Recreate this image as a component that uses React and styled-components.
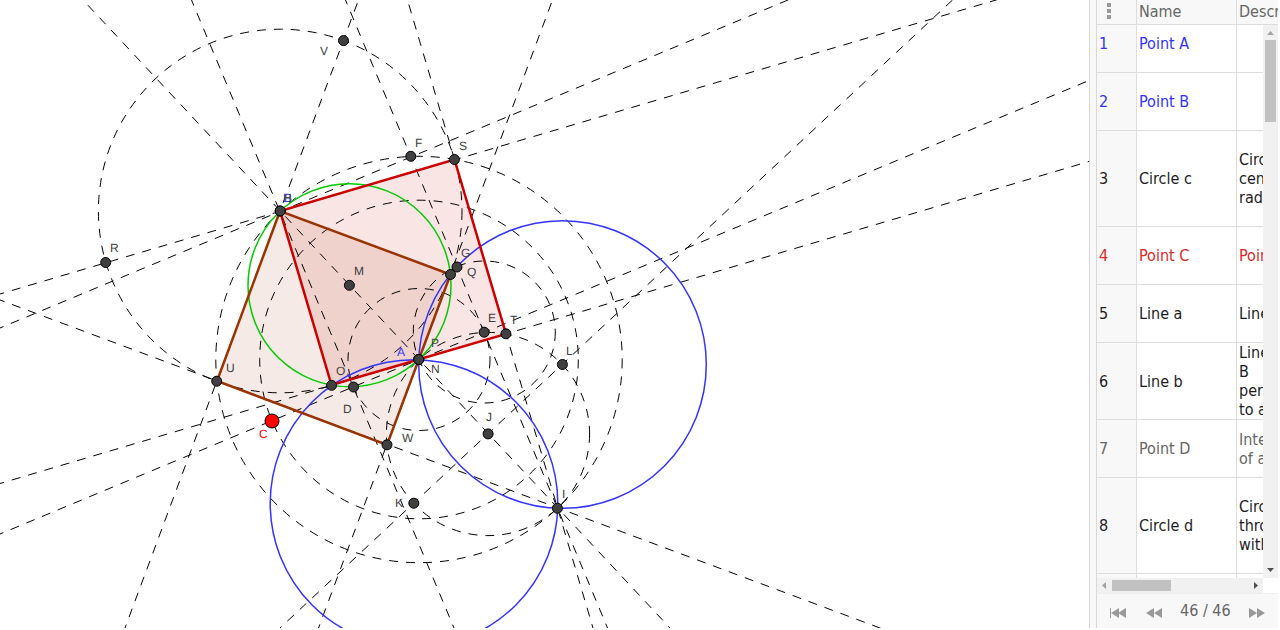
import React from 'react';
import styled, { createGlobalStyle } from 'styled-components';

const DASH = 9;
const GAP = 8;
const REACH = 90;

const points = [
  { name: 'A', x: 418.7, y: 359.5, dx: -22, dy: -4, color: '#3333ff' },
  { name: 'B', x: 280.2, y: 211, dx: 4, dy: -9, color: '#3333ff' },
  { name: 'D', x: 353.5, y: 387, dx: -11, dy: 26 },
  { name: 'E', x: 484.2, y: 332.2, dx: 4, dy: -10 },
  { name: 'F', x: 410.8, y: 156.3, dx: 4, dy: -9 },
  { name: 'G', x: 457, y: 267, dx: 4, dy: -10 },
  { name: 'H', x: 280.2, y: 211, dx: 3, dy: -9 },
  { name: 'I', x: 557.4, y: 508.2, dx: 5, dy: -10 },
  { name: 'J', x: 488.1, y: 433.9, dx: -2, dy: -13 },
  { name: 'K', x: 413.8, y: 503.2, dx: -19, dy: 4 },
  { name: 'L', x: 562.4, y: 364.5, dx: 4, dy: -10 },
  { name: 'M', x: 349.4, y: 285.3, dx: 5, dy: -10 },
  { name: 'N', x: 418.7, y: 359.5, dx: 12, dy: 13 },
  { name: 'O', x: 331.6, y: 385.3, dx: 4, dy: -10 },
  { name: 'P', x: 418.7, y: 359.5, dx: 12, dy: -13 },
  { name: 'Q', x: 450.5, y: 274.5, dx: 16, dy: 1 },
  { name: 'R', x: 105.7, y: 262.5, dx: 4, dy: -11 },
  { name: 'S', x: 454.4, y: 159.5, dx: 5, dy: -10 },
  { name: 'T', x: 505.9, y: 333.8, dx: 4, dy: -10 },
  { name: 'U', x: 216.7, y: 381.2, dx: 9, dy: -9 },
  { name: 'V', x: 343.5, y: 40.6, dx: -24, dy: 14 },
  { name: 'W', x: 387, y: 444.8, dx: 15, dy: -3 },
];

// from, to, and the middle of one dash
const lines = [
  [[0, 534], [1089, 80.5], [768, 214]],
  [[0, 328], [788, 0], [391.5, 164.5]],
  [[191.5, 0], [454, 628], [199, 17]],
  [[345.5, 0], [607.5, 628], [359.5, 31.3]],
  [[83, 0], [670, 628], [91.5, 8]],
  [[952.5, 0], [280, 628], [937, 15]],
  [[0, 294], [996, 0], [766, 67.5]],
  [[0, 483.5], [1089, 161.5], [766, 257]],
  [[407.5, 0], [593, 628], [409.7, 9]],
  [[358.5, 0], [125, 628], [356, 7.5]],
  [[552.5, 0], [318.5, 628], [549.8, 7.3]],
  [[0, 300], [880, 628], [700.7, 562.7]],
];

const dashedCircles = [
  [419, 359.5, 159.3],
  [419, 359.5, 203.2],
  [419, 359.5, 71],
  [484.3, 332, 71],
  [488, 434, 101.6],
  [280.2, 211, 181.8],
];

const rows = [
  { name: 'Point A', height: 48, lift: true, color: '#3333ff' },
  { name: 'Point B', height: 58, color: '#3333ff' },
  { name: 'Circle c', height: 96, text: ['Circle with', 'center A and', 'radius 1'] },
  { name: 'Point C', height: 58, text: ['Point on c'], color: '#dc2828' },
  { name: 'Line a', height: 58, text: ['Line A, C'] },
  { name: 'Line b', height: 77, text: ['Line through', 'B', 'perpendicular', 'to a'] },
  { name: 'Point D', height: 58, text: ['Intersection', 'of a, b'], color: '#666666' },
  { name: 'Circle d', height: 96, text: ['Circle', 'through B', 'with center A'] },
  { name: 'Line e', height: 58, text: ['Line'] },
];

const DashedLine = ({ from, to, mid }) => {
  const length = Math.hypot(to[0] - from[0], to[1] - from[1]);
  const ux = (to[0] - from[0]) / length;
  const uy = (to[1] - from[1]) / length;
  const start = [from[0] - ux * REACH, from[1] - uy * REACH];
  const run = Math.hypot(mid[0] - start[0], mid[1] - start[1]);
  const offset = -((run - DASH / 2) % (DASH + GAP));

  return (
    <Dashed
      as="line"
      x1={start[0]}
      y1={start[1]}
      x2={to[0] + ux * REACH}
      y2={to[1] + uy * REACH}
      strokeDashoffset={offset}
    />
  );
};

const Construction = () => (
  <Drawing aria-label="Geometric construction">
    <polygon points="280,211 331.5,385 506,334 454.5,159.5" fill="#cc0000" fillOpacity="0.1" />
    <polygon points="280,211 217,381 387,445 450.5,274.5" fill="#993300" fillOpacity="0.1" />
    {dashedCircles.map(([cx, cy, r], index) => (
      <Dashed as="circle" key={index} cx={cx} cy={cy} r={r} />
    ))}
    {lines.map(([from, to, mid], index) => (
      <DashedLine key={index} from={from} to={to} mid={mid} />
    ))}
    <Outline as="circle" cx="349.5" cy="285.3" r="101.5" $color="#00cc00" $width={1.5} />
    <Outline as="circle" cx="562.5" cy="364.5" r="143.8" $color="#3333ff" $width={1.5} />
    <Outline as="circle" cx="414" cy="503.5" r="143.8" $color="#3333ff" $width={1.5} />
    <Outline as="polygon" points="280,211 331.5,385 506,334 454.5,159.5" $color="#cc0000" $width={2.5} />
    <Outline as="polygon" points="280,211 217,381 387,445 450.5,274.5" $color="#993300" $width={2.5} />
    {points.map(({ name, x, y }) => (
      <circle key={name} cx={x} cy={y} r="5" fill="#404040" stroke="#000" />
    ))}
    <circle cx="272" cy="421" r="7" fill="#ff0000" stroke="#000" />
    {points.map(({ name, x, y, dx, dy, color }) => (
      <Label key={name} x={Math.round(x + dx)} y={Math.round(y + dy)} $color={color}>
        {name}
      </Label>
    ))}
    <Label x="259" y="438" $color="#ff0000">
      C
    </Label>
  </Drawing>
);

const Columns = () => (
  <colgroup>
    <col width="40" />
    <col width="100" />
    <col width="101" />
  </colgroup>
);

const Protocol = () => (
  <Panel>
    <HeadClip>
      <Table>
        <Columns />
        <thead>
          <tr>
            <HeadCell>
              <MenuButton type="button" aria-label="Columns">
                <i />
                <i />
                <i />
              </MenuButton>
            </HeadCell>
            <HeadCell>Name</HeadCell>
            <HeadCell>Description</HeadCell>
          </tr>
        </thead>
      </Table>
    </HeadClip>
    <ScrollArea>
      <Body>
        <Table>
          <Columns />
          <tbody>
            {rows.map(({ name, height, text = [], color, lift }, index) => (
              <Row key={name} $height={height} $color={color} $lift={lift}>
                <td>{index + 1}</td>
                <td>{name}</td>
                <td>
                  {text.map(line => (
                    <div key={line}>{line}</div>
                  ))}
                </td>
              </Row>
            ))}
          </tbody>
        </Table>
      </Body>
      <Track $vertical>
        <Arrow viewBox="0 0 15 15">
          <path d="M4 10 L7.5 6 L11 10Z" fill="#a3a3a3" />
        </Arrow>
        <Thumb $vertical />
        <Arrow viewBox="0 0 15 15">
          <path d="M4 5 L7.5 9 L11 5Z" fill="#505050" />
        </Arrow>
      </Track>
      <Track>
        <Arrow viewBox="0 0 15 15">
          <path d="M9 4 L5 7.5 L9 11Z" fill="#a3a3a3" />
        </Arrow>
        <Thumb />
        <Arrow viewBox="0 0 15 15">
          <path d="M6 4 L10 7.5 L6 11Z" fill="#505050" />
        </Arrow>
      </Track>
    </ScrollArea>
    <NavBar>
      <NavButton type="button" aria-label="First step">
        <svg width="18" height="12" viewBox="0 0 18 12">
          <path d="M1 1h1v10h-1zM10 1v10L2 6zM17 1v10L9 6z" fill="#999" />
        </svg>
      </NavButton>
      <NavButton type="button" aria-label="Previous step">
        <svg width="18" height="12" viewBox="0 0 18 12">
          <path d="M9 1v10L1 6zM17 1v10L9 6z" fill="#999" />
        </svg>
      </NavButton>
      <Step>46 / 46</Step>
      <NavButton type="button" aria-label="Next step">
        <svg width="18" height="12" viewBox="0 0 18 12">
          <path d="M1 1v10L9 6zM9 1v10L17 6z" fill="#999" />
        </svg>
      </NavButton>
    </NavBar>
  </Panel>
);

const App = () => (
  <>
    <GlobalStyle />
    <Wrapper>
      <Construction />
      <Protocol />
    </Wrapper>
  </>
);

export default App;

const GlobalStyle = createGlobalStyle`
  * {
    box-sizing: border-box;
  }

  body {
    margin: 0;
    background: #fff;
    font-family: 'DejaVu Sans Condensed', 'DejaVu Sans', sans-serif;
    font-size: 16px;
    line-height: 19px;
  }
`;
const Wrapper = styled.main`
  display: flex;
  height: 100vh;
  padding: 0 2px 2px 0;
  overflow: hidden;
`;
const Drawing = styled.svg`
  flex: 1;
  min-width: 0;
  height: 100%;
`;
const Dashed = styled.path`
  fill: none;
  stroke: #000;
  stroke-width: 1;
  stroke-dasharray: ${DASH} ${GAP};
`;
const Outline = styled.path`
  fill: none;
  stroke: ${({ $color }) => $color};
  stroke-width: ${({ $width }) => $width};
`;
const Label = styled.text`
  fill: ${({ $color }) => $color || '#404040'};
  font-family: 'Liberation Sans', sans-serif;
  font-size: 12px;
  text-rendering: geometricPrecision;
`;
const Panel = styled.aside`
  display: flex;
  flex-direction: column;
  width: 189px;
  border-left: 1px solid #d8d8d8;
  padding-left: 6px;
  background: linear-gradient(to right, #f8f8f8 6px, #fff 6px);
`;
const HeadClip = styled.div`
  overflow: hidden;
  border-left: 1px solid #d8d8d8;
  background: #f8f8f8;
`;
const Table = styled.table`
  width: 241px;
  table-layout: fixed;
  border-collapse: separate;
  border-spacing: 0;
`;
const HeadCell = styled.th`
  height: 25px;
  padding: 0 2px 2px;
  border-right: 1px solid #ddd;
  border-bottom: 1px solid #ddd;
  color: #666;
  font-weight: 400;
  text-align: left;
`;
const MenuButton = styled.button`
  display: grid;
  gap: 2px;
  margin-left: 8px;
  padding: 0;
  border: 0;
  background: none;

  i {
    width: 4px;
    height: 4px;
    background: #999;
  }
`;
const ScrollArea = styled.div`
  display: grid;
  flex: 1;
  grid-template-columns: minmax(0, 1fr) 15px;
  grid-template-rows: minmax(0, 1fr) 15px;
  min-height: 0;
  border-left: 1px solid #d8d8d8;
`;
const Body = styled.div`
  overflow: hidden;
`;
const Row = styled.tr`
  height: ${({ $height }) => $height}px;
  color: ${({ $color }) => $color || '#1c1c1f'};

  td {
    padding: 0 2px;
    padding-bottom: ${({ $lift }) => ($lift ? 10 : 0)}px;
    border-right: 1px solid #ddd;
    border-bottom: 1px solid #ddd;
    white-space: nowrap;
  }

  td:first-child {
    background: #f8f8f8;
  }
`;
const Track = styled.div`
  display: flex;
  flex-direction: ${({ $vertical }) => ($vertical ? 'column' : 'row')};
  background: #f1f1f1;
`;
const Arrow = styled.svg`
  flex: none;
  width: 15px;
  height: 15px;
`;
const Thumb = styled.div`
  width: ${({ $vertical }) => ($vertical ? '11px' : '59px')};
  height: ${({ $vertical }) => ($vertical ? '82px' : '11px')};
  margin: ${({ $vertical }) => ($vertical ? '0 2px auto' : '2px auto 2px 0')};
  background: #c1c1c1;
`;
const NavBar = styled.nav`
  display: flex;
  flex: none;
  align-items: center;
  height: 35px;
  padding-left: 12px;
  border-top: 1px solid #eee;
  border-left: 1px solid #d8d8d8;
  background: #f8f8f8;
`;
const NavButton = styled.button`
  display: flex;
  flex: none;
  margin-right: 18px;
  padding: 4px 0 0;
  border: 0;
  background: none;

  &:last-child {
    margin-right: 0;
  }
`;
const Step = styled.span`
  margin: 0 17px 1px -1px;
  color: #666;
  white-space: nowrap;
`;
